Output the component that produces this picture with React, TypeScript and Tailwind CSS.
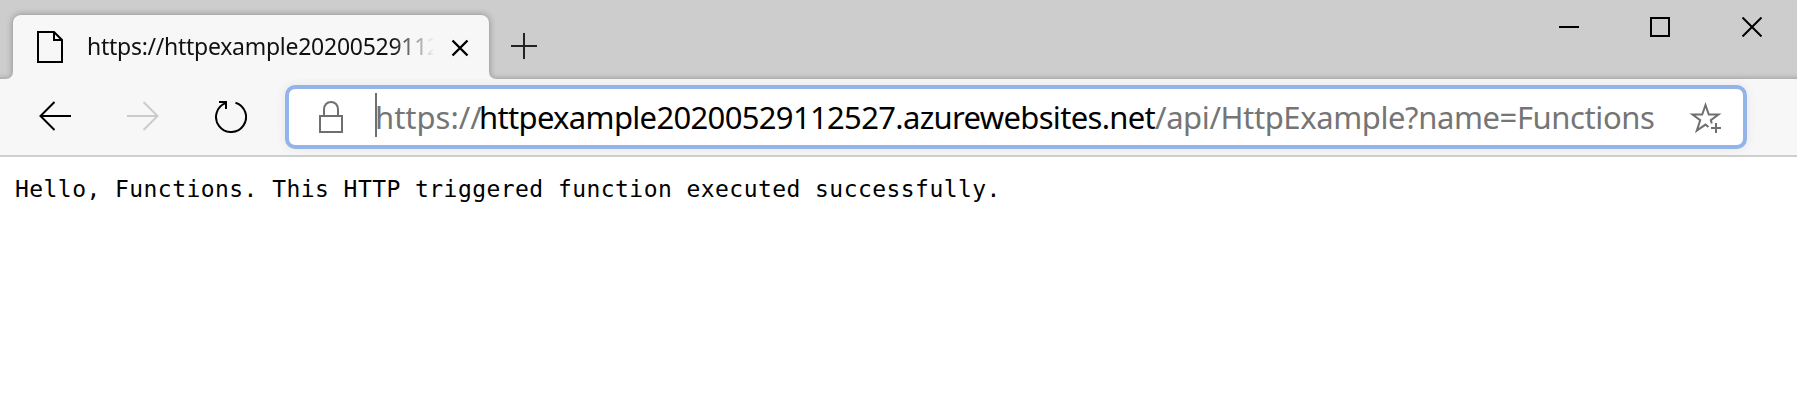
import type { ReactNode } from "react";

type IconProps = { w: number; h: number; className?: string; children: ReactNode };

function Icon({ w, h, className = "", children }: IconProps) {
  return (
    <svg width={w} height={h} viewBox={`0 0 ${w} ${h}`} fill="none" stroke="currentColor" strokeWidth="2" className={`block shrink-0 ${className}`}>
      {children}
    </svg>
  );
}

function Tab() {
  return (
    <div className="relative ml-[13px] flex h-16 w-[476px] shrink-0 items-start rounded-t-lg bg-[#f7f7f7] pl-6 shadow-[0_0_7px_rgba(0,0,0,0.35)]">
      <Icon w={26} h={32} className="mt-4 text-black">
        <path d="M1 1H17L25 9V31H1Z" />
        <path d="M17 1V9H25" />
      </Icon>
      <div className="ml-6 mt-[13px] h-9 w-[347px] overflow-hidden whitespace-nowrap font-['Noto_Sans',sans-serif] text-[23px] leading-9 tracking-[-0.27px] text-[#111] [mask-image:linear-gradient(to_right,black_88%,transparent)]">
        https://httpexample20200529112
      </div>
      <Icon w={18} h={18} className="ml-[17px] mt-6 text-black">
        <path d="M1.5 1.5L16.5 16.5M16.5 1.5L1.5 16.5" strokeWidth="2.4" />
      </Icon>
    </div>
  );
}

function TitleBar() {
  return (
    <div className="flex h-[79px] overflow-hidden bg-[#cdcdcd] shadow-[inset_0_-7px_6px_-7px_rgba(0,0,0,0.3)]">
      <div className="relative flex items-end">
        <svg width="8" height="8" viewBox="0 0 8 8" className="absolute bottom-0 left-[5px] z-10 block">
          <path d="M8 0Q8 8 0 8H8Z" fill="#f7f7f7" />
        </svg>
        <Tab />
        <svg width="8" height="8" viewBox="0 0 8 8" className="relative block">
          <path d="M0 0Q0 8 8 8H0Z" fill="#f7f7f7" />
        </svg>
      </div>
      <Icon w={26} h={26} className="ml-[14px] mt-[33px] text-[#222]">
        <path d="M13 0V26M0 13H26" />
      </Icon>
      <div className="ml-auto flex pr-[35px] pt-[17px] text-black">
        <Icon w={20} h={20}><path d="M0 10H20" /></Icon>
        <Icon w={20} h={20} className="ml-[71px]"><path d="M1 1H19V19H1Z" /></Icon>
        <Icon w={20} h={20} className="ml-[72px]"><path d="M0.5 0.5L19.5 19.5M19.5 0.5L0.5 19.5" /></Icon>
      </div>
    </div>
  );
}

function AddressBar() {
  return (
    <div className="flex h-16 w-[1462px] shrink-0 items-center rounded-[10px] border-4 border-[#93b4e9] bg-white text-[#6f6f6f] shadow-[0_0_12px_rgba(0,0,0,0.07)]">
      <Icon w={24} h={32} className="ml-[30px]">
        <path d="M1 15H23V31H1ZM5 15V8.5C5 4 8 1 12 1S19 4 19 8.5V15" />
      </Icon>
      <div className="mb-1 ml-8 h-11 w-0.5 bg-[#6f6f6f]" />
      <div className="-ml-0.5 flex w-[1297px] whitespace-nowrap font-['Noto_Sans',sans-serif] text-[31px] leading-[44px]">
        <span className="w-[104px] text-[#757575]">https://</span>
        <span className="w-[676px] tracking-[-0.67px] text-black">httpexample20200529112527.azurewebsites.net</span>
        <span className="tracking-[-0.4px] text-[#757575]">/api/HttpExample?name=Functions</span>
      </div>
      <Icon w={33} h={32} className="ml-[17px]">
        <path d="M19.5 26L16.5 23.6L7.8 29.6L11.2 19.2L3.5 13.5H13.2L16.5 4L19.8 13.5H29.5L21.8 19.2L22.8 22.5" />
        <path d="M27 22V32M22 27H32" />
      </Icon>
    </div>
  );
}

export default function App() {
  return (
    <div className="h-[418px] w-[1797px] overflow-hidden bg-white">
      <TitleBar />
      <div className="flex h-[78px] border-b-2 border-[#cfcfcf] bg-[#f7f7f7] pl-[39px] pt-1.5">
        <Icon w={32} h={30} className="mt-4 text-black">
          <path d="M32 15H2M15.5 1L1.5 15L15.5 29" />
        </Icon>
        <Icon w={32} h={30} className="ml-14 mt-4 text-[#cbcbcb]">
          <path d="M0 15H30M16.5 1L30.5 15L16.5 29" />
        </Icon>
        <Icon w={32} h={33} className="ml-14 mt-[15px] text-black">
          <path d="M20.5 2.7A15 15 0 1 1 11 2.9M4 2H11V9" />
        </Icon>
        <div className="ml-[38px]">
          <AddressBar />
        </div>
      </div>
      <pre className="pl-[15px] pt-[14px] font-['DejaVu_Sans_Mono',monospace] text-[23px] leading-9 tracking-[0.44px] text-black">
        Hello, Functions. This HTTP triggered function executed successfully.
      </pre>
    </div>
  );
}
